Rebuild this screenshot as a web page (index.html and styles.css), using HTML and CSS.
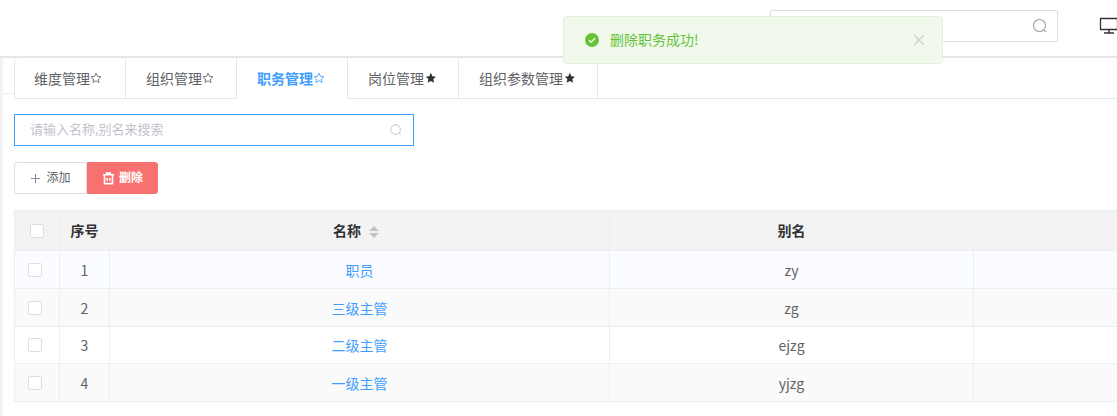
FILE: index.html
```html
<!DOCTYPE html>
<html lang="zh">
<head>
<meta charset="utf-8">
<title>职务管理</title>
<link rel="stylesheet" href="styles.css">
</head>
<body>
<div class="toast">
  <svg class="toast-icon" viewBox="0 0 16 16"><circle cx="8" cy="8" r="7" fill="#67c23a"/><path d="M5 8.200l2.100 2 3.900-4" fill="none" stroke="#fff" stroke-width="1.300"/></svg>
  <span class="toast-text">删除职务成功!</span>
  <svg class="toast-close" viewBox="0 0 12 12"><path d="M1 1l10 10M11 1L1 11" stroke="#c8cdd3" stroke-width="1.100" fill="none"/></svg>
</div>
<header class="topbar">
  <div class="top-search">
    <svg class="search-icon lg" viewBox="0 0 16 16"><circle cx="7.500" cy="7.500" r="6" fill="none" stroke="#a0a3a8" stroke-width="1.100"/><path d="M12 12l2 2" stroke="#a0a3a8" stroke-width="1.100"/></svg>
  </div>
  <svg class="monitor" viewBox="0 0 20 20"><path d="M1.500 2.500h17v11h-17z" fill="none" stroke="#333" stroke-width="1.300"/><path d="M10 13.500v3M5 17h10" stroke="#333" stroke-width="1.500"/></svg>
</header>
<div class="page">
  <aside class="strip"><div class="strip-top"></div></aside>
  <main class="content">
    <nav class="tabs">
      <a class="tab first">维度管理<svg class="star" viewBox="0 0 14 14"><path d="M7 1.300l1.700 3.700 4 .5-3 2.700.8 4L7 10.200l-3.500 2 .8-4-3-2.700 4-.5z" fill="none" stroke="#606266" stroke-width="1"/></svg></a>
      <a class="tab">组织管理<svg class="star" viewBox="0 0 14 14"><path d="M7 1.300l1.700 3.700 4 .5-3 2.700.8 4L7 10.200l-3.500 2 .8-4-3-2.700 4-.5z" fill="none" stroke="#606266" stroke-width="1"/></svg></a>
      <a class="tab active">职务管理<svg class="star" viewBox="0 0 14 14"><path d="M7 1.300l1.700 3.700 4 .5-3 2.700.8 4L7 10.200l-3.500 2 .8-4-3-2.700 4-.5z" fill="none" stroke="#409eff" stroke-width="1"/></svg></a>
      <a class="tab">岗位管理<svg class="star" viewBox="-1 0 14 14"><path d="M7 1l1.800 3.900 4.200.5-3.100 2.900.8 4.200L7 10.400l-3.700 2.100.8-4.200L1 5.400l4.200-.5z" fill="#303133"/></svg></a>
      <a class="tab">组织参数管理<svg class="star" viewBox="-1 0 14 14"><path d="M7 1l1.800 3.900 4.200.5-3.100 2.900.8 4.200L7 10.400l-3.700 2.100.8-4.200L1 5.400l4.200-.5z" fill="#303133"/></svg></a>
    </nav>
    <div class="search">
      <span class="placeholder">请输入名称,别名来搜索</span>
      <svg class="search-icon" viewBox="0 0 16 16"><circle cx="7.500" cy="7.500" r="5.500" fill="none" stroke="#c0c4cc" stroke-width="1.100"/><path d="M11.500 11.500l2 2" stroke="#c0c4cc" stroke-width="1.100"/></svg>
    </div>
    <div class="actions">
      <button class="btn add"><svg class="btn-icon" viewBox="0 0 12 12"><path d="M6 1v10M1 6h10" stroke="#7d8087" stroke-width="1"/></svg><span class="btn-text">添加</span></button>
      <button class="btn del"><svg class="btn-icon trash" viewBox="0 0 14 14"><path d="M1 3h12M5 3V1.200h4V3M2.700 3v9.500h8.600V3M5.500 6.500v3M8.500 6.500v3" fill="none" stroke="#fff" stroke-width="1.700"/></svg><span class="btn-text">删除</span></button>
    </div>
    <table class="grid">
      <colgroup><col class="c-check"><col class="c-no"><col class="c-name"><col class="c-alias"><col class="c-rest"></colgroup>
      <thead>
        <tr><th><span class="check"></span></th><th><span class="lift">序号</span></th><th><span class="lift">名称</span><span class="sort"><i class="up"></i><i class="down"></i></span></th><th><span class="lift">别名</span></th><th></th></tr>
      </thead>
      <tbody>
        <tr class="row-a r38"><td><span class="check"></span></td><td>1</td><td class="link">职员</td><td>zy</td><td></td></tr>
        <tr class="row-b r38"><td><span class="check"></span></td><td>2</td><td class="link">三级主管</td><td>zg</td><td></td></tr>
        <tr class="row-c r37"><td><span class="check"></span></td><td>3</td><td class="link">二级主管</td><td>ejzg</td><td></td></tr>
        <tr class="row-b r38"><td><span class="check"></span></td><td>4</td><td class="link">一级主管</td><td>yjzg</td><td></td></tr>
      </tbody>
    </table>
  </main>
</div>
</body>
</html>
```
FILE: styles.css
```css
* { box-sizing: border-box; }
html, body { margin: 0; height: 100%; overflow: hidden; }
body {
  position: relative;
  width: 1117px;
  height: 416px;
  background: #fff;
  font-family: "Noto Sans CJK SC", "Noto Sans", sans-serif;
  font-size: 14px;
  color: #606266;
}
.topbar {
  height: 58px;
  border-bottom: 2px solid #e6e6ea;
  display: flex;
  align-items: flex-start;
  padding: 10px 0 0 770px;
}
.top-search {
  width: 288px;
  height: 32px;
  flex: none;
  border: 1px solid #dcdfe6;
  border-radius: 2px;
  display: flex;
  align-items: center;
  justify-content: flex-end;
  padding-right: 9px;
}
.monitor { width: 20px; height: 20px; flex: none; margin: 6px 0 0 41px; }
.page { display: flex; height: 358px; }
.strip { width: 14px; flex: none; border-left: 3px solid #f3f3f4; }
.strip-top { height: 36px; border-bottom: 1px solid #ececef; }
.content { width: 1103px; flex: none; }
.tabs { display: flex; height: 41px; border-bottom: 1px solid #e4e7ed; }
.tab {
  height: 41px;
  padding: 0 22px 0 20px;
  color: #606266;
  font-size: 14px;
  border-right: 1px solid #e4e7ed;
  border-bottom: 1px solid #e4e7ed;
  white-space: nowrap;
  display: flex;
  align-items: center;
}
.tab.first { border-left: 1px solid #e4e7ed; border-top-left-radius: 3px; padding-left: 19px; padding-right: 23px; }
.tab.active { color: #409eff; font-weight: 700; border-bottom-color: #fff; }
.star { width: 12px; height: 12px; flex: none; }
.search {
  width: 400px;
  height: 32px;
  margin-top: 15px;
  border: 1px solid #409eff;
  display: flex;
  align-items: center;
  justify-content: space-between;
  padding: 0 10px 3px 15px;
}
.placeholder { color: #c0c4cc; font-size: 13px; }
.search-icon { width: 14px; height: 14px; position: relative; top: 1px; }
.top-search .search-icon { top: 0; }
.search-icon.lg { width: 16px; height: 16px; }
.actions { display: flex; margin-top: 16px; }
.btn {
  height: 32px;
  font: inherit;
  font-size: 12px;
  border-radius: 3px;
  display: flex;
  align-items: center;
  justify-content: center;
  padding: 0;
}
.btn-text { position: relative; top: -2px; }
.add { width: 73px; background: #fff; border: 1px solid #dcdfe6; color: #606266; border-radius: 3px 0 0 3px; }
.del { width: 71px; background: #f87171; border: 1px solid #f87171; color: #fff; font-weight: 700; border-radius: 0 3px 3px 0; }
.btn-icon { width: 11px; height: 11px; margin-right: 5px; }
.trash { width: 13px; height: 13px; margin-right: 4px; }
.grid {
  width: 1120px;
  margin-top: 16px;
  border-collapse: collapse;
  table-layout: fixed;
  border-top: 1px solid #ebeef5;
}
.c-check { width: 45px; }
.c-no { width: 50px; }
.c-name { width: 500px; }
.c-alias { width: 364px; }
.grid th, .grid td {
  border: 1px solid #ebeef5;
  text-align: center;
  padding: 0;
  font-size: 14px;
}
.grid th { height: 40px; background: #f3f3f4; color: #303133; font-size: 14px; font-weight: 700; }
.lift { position: relative; top: -1px; }
.grid td { color: #606266; }
.r38 td { height: 38px; }
.r37 td { height: 37px; }
.row-a td { background: #fbfcff; }
.row-b td { background: #fafafa; }
.row-c td { background: #fff; }
.grid td.link { color: #409eff; font-size: 14px; }
.check {
  display: inline-block;
  width: 14px;
  height: 14px;
  vertical-align: middle;
  background: #fff;
  border: 1px solid #dcdfe6;
  border-radius: 2px;
}
th .check { position: relative; top: -2px; }
td .check { position: relative; left: -2px; top: -2px; }
.sort { display: inline-flex; flex-direction: column; gap: 2px; margin: 0 7px 0 8px; vertical-align: middle; position: relative; top: -1px; }
.sort i { display: block; width: 0; height: 0; border-left: 5px solid transparent; border-right: 5px solid transparent; }
.sort .up { border-bottom: 5px solid #c0c4cc; }
.sort .down { border-top: 5px solid #c0c4cc; }
.toast {
  position: absolute;
  left: 563px;
  top: 16px;
  width: 380px;
  height: 48px;
  background: #f0f9eb;
  border: 1px solid #e1f3d8;
  border-radius: 4px;
  display: flex;
  align-items: center;
  padding-left: 20px;
  z-index: 5;
}
.toast-icon { width: 16px; height: 16px; flex: none; }
.toast-text { margin-left: 10px; color: #67c23a; font-size: 14px; flex: 1; position: relative; top: -1px; }
.toast-close { width: 12px; height: 12px; flex: none; margin-right: 17px; }
```
